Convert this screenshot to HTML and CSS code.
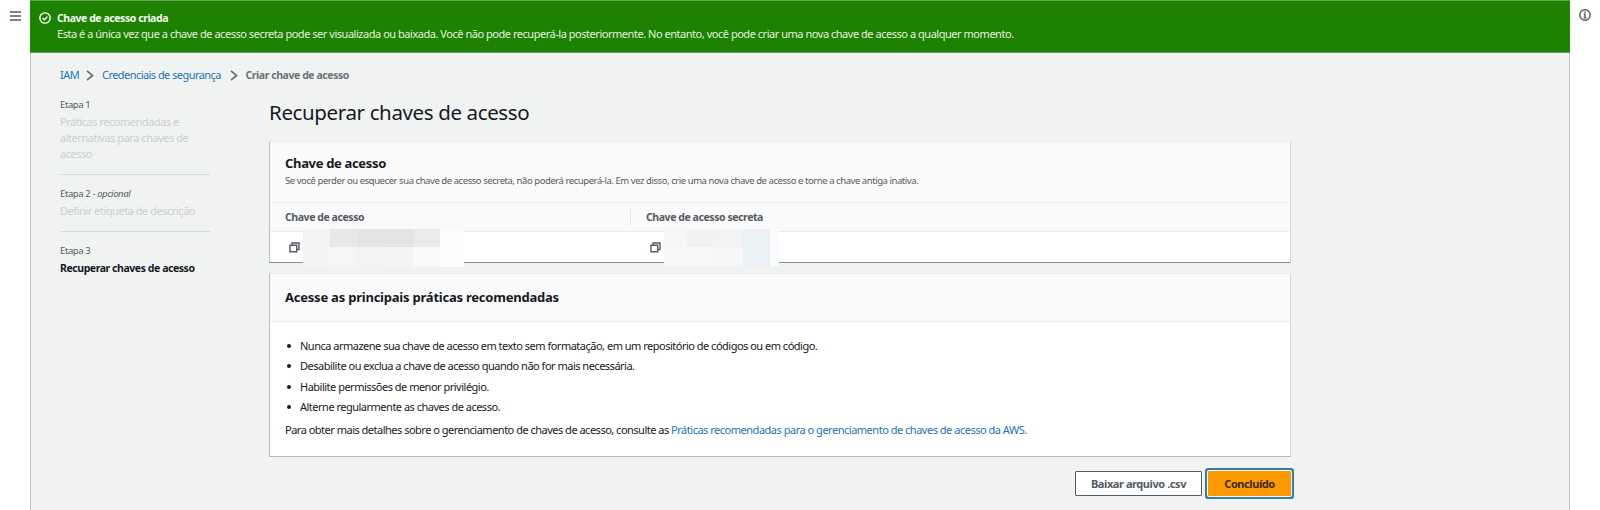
FILE: index.html
```html
<!DOCTYPE html>
<html lang="pt-BR">
<head>
<meta charset="utf-8">
<title>Criar chave de acesso</title>
<link rel="stylesheet" href="styles.css">
</head>
<body>
<div class="app">
  <aside class="rail rail-left">
    <svg class="menu-icon" viewBox="0 0 11 10"><path d="M0 1h11M0 5h11M0 9h11"/></svg>
  </aside>
  <main class="main">
    <section class="flash">
      <svg class="flash-icon" viewBox="0 0 13 13"><circle cx="6.5" cy="6.5" r="5.6"/><path d="M3.8 6.6l2 1.9 3.4-3.5"/></svg>
      <div>
        <div class="flash-title">Chave de acesso criada</div>
        <div class="flash-text">Esta é a única vez que a chave de acesso secreta pode ser visualizada ou baixada. Você não pode recuperá-la posteriormente. No entanto, você pode criar uma nova chave de acesso a qualquer momento.</div>
      </div>
    </section>
    <div class="page">
      <nav class="crumbs">
        <a class="crumb-first">IAM</a>
        <svg class="chevron" viewBox="0 0 8 11"><path d="M1 .8l5.6 4.7L1 10.2"/></svg>
        <a class="crumb-mid">Credenciais de segurança</a>
        <svg class="chevron" viewBox="0 0 8 11"><path d="M1 .8l5.6 4.7L1 10.2"/></svg>
        <b>Criar chave de acesso</b>
      </nav>
      <div class="columns">
        <ol class="steps">
          <li class="step"><div class="step-label">Etapa 1</div><div class="step-name">Práticas recomendadas e<br>alternativas para chaves de<br>acesso</div></li>
          <li class="step"><div class="step-label">Etapa 2 - <i>opcional</i></div><div class="step-name">Definir etiqueta de descrição</div></li>
          <li class="step"><div class="step-label">Etapa 3</div><div class="step-name current">Recuperar chaves de acesso</div></li>
        </ol>
        <div class="content">
          <h1>Recuperar chaves de acesso</h1>
          <section class="card keys">
            <header class="card-head keys-head">
              <h2>Chave de acesso</h2>
              <p>Se você perder ou esquecer sua chave de acesso secreta, não poderá recuperá-la. Em vez disso, crie uma nova chave de acesso e torne a chave antiga inativa.</p>
            </header>
            <div class="table-row table-head"><div>Chave de acesso</div><div class="split">Chave de acesso secreta</div></div>
            <div class="table-row table-body">
              <div class="cell">
                <svg class="copy" viewBox="0 0 11 11"><path d="M3 3V1h7v6.500H8M1 3.300h6.700v6.500H1z"/></svg>
                <div class="mask mask-a"><i class="a1"></i><i class="a2"></i><i class="a3"></i><i class="a3"></i><i class="a4"></i><i class="a5"></i><i class="a6"></i><i class="a7"></i><i class="a1"></i><i class="a6"></i><i class="a8"></i><i class="a9"></i></div>
              </div>
              <div class="cell">
                <svg class="copy" viewBox="0 0 11 11"><path d="M3 3V1h7v6.500H8M1 3.300h6.700v6.500H1z"/></svg>
                <div class="mask mask-b"><i class="b1"></i><i class="b2"></i><i class="b3"></i><i class="b4"></i><i class="b5"></i><i class="b6"></i><i class="b6"></i><i class="b1"></i><i class="b4"></i><i class="b5"></i></div>
              </div>
            </div>
          </section>
          <section class="card tips">
            <header class="card-head tips-head"><h2 class="wide">Acesse as principais práticas recomendadas</h2></header>
            <div class="tips-body">
              <ul>
                <li>Nunca armazene sua chave de acesso em texto sem formatação, em um repositório de códigos ou em código.</li>
                <li>Desabilite ou exclua a chave de acesso quando não for mais necessária.</li>
                <li>Habilite permissões de menor privilégio.</li>
                <li>Alterne regularmente as chaves de acesso.</li>
              </ul>
              <p>Para obter mais detalhes sobre o gerenciamento de chaves de acesso, consulte as <a>Práticas recomendadas para o gerenciamento de chaves de acesso da AWS.</a></p>
            </div>
          </section>
          <div class="actions">
            <button class="btn">Baixar arquivo .csv</button>
            <button class="btn primary">Concluído</button>
          </div>
        </div>
      </div>
    </div>
  </main>
  <aside class="rail rail-right">
    <svg class="info-icon" viewBox="0 0 12 12"><circle cx="6" cy="6" r="5.200"/><path d="M6 2.500v1.600M4.700 5.300H6v3.500M4.400 8.900h3.200"/></svg>
  </aside>
</div>
</body>
</html>
```
FILE: styles.css
```css
* { box-sizing: border-box; }
body {
  margin: 0;
  background: #fff;
  color: #16191f;
  font: 11px/16px "Noto Sans", sans-serif;
  letter-spacing: -0.5px;
  overflow: hidden;
}
h1, h2, p, ul, ol { margin: 0; padding: 0; }
svg { display: block; fill: none; flex: none; }
a { color: #1b74b8; }
.app { display: flex; height: 510px; }
.rail { width: 30px; flex: none; }
.rail-left { padding: 11px 0 0 10px; }
.rail-right { padding: 9px 0 0 9px; }
.menu-icon { width: 11px; height: 10px; stroke: #545b64; stroke-width: 1.5; }
.info-icon { width: 12px; height: 12px; stroke: #545b64; stroke-width: 1.4; }
.main { flex: 1; min-width: 0; display: flex; flex-direction: column; white-space: nowrap; }

.flash {
  display: flex;
  gap: 6px;
  height: 53px;
  padding: 9px 8px 0 9px;
  background: #1d8102;
  border-top: 1px solid #61a74e;
  border-bottom: 1px solid #6f9a69;
  color: #f4faf2;
}
.flash-icon { width: 12px; height: 12px; margin-top: 2px; stroke: #fff; stroke-width: 1.5; }
.flash-title { font-weight: 700; font-size: 10.5px; letter-spacing: -0.445px; }
.flash-text { letter-spacing: -0.468px; color: #e2f1de; }

.page {
  flex: 1;
  padding: 14px 29px 0;
  background: #f1f3f3;
  border: solid #c3c9c9;
  border-width: 0 1px;
}
.crumbs { display: flex; align-items: center; height: 16px; letter-spacing: -0.55px; }
.crumbs b { color: #6b7378; font-size: 10.5px; letter-spacing: -0.43px; }
.chevron { width: 8px; height: 11px; margin: 0 8px; stroke: #687078; stroke-width: 1.7; }
.crumb-first { width: 18px; }
.crumb-mid { width: 119.5px; }

.columns { display: flex; gap: 59px; padding-top: 14px; }
.steps { width: 150px; list-style: none; }
.step { padding-bottom: 12px; border-bottom: 1px solid #d5dbdb; }
.step + .step { padding-top: 11px; }
.step:last-child { border: 0; }
.step-label { font-size: 9.5px; line-height: 16px; letter-spacing: -0.4px; color: #545b64; }
.step-name { padding-top: 1px; margin-bottom: -0.5px; line-height: 16.2px; letter-spacing: -0.465px; color: #cbcfcf; }
.step-name.current { color: #16191f; font-weight: 700; font-size: 10.5px; letter-spacing: -0.44px; }

.content { width: 1022px; }
h1 { padding: 2px 0 0; height: 44px; font-size: 20.500px; line-height: 26px; font-weight: 400; letter-spacing: -0.37px; }
h2 { font-size: 13px; line-height: 20px; font-weight: 700; letter-spacing: -0.33px; }
h2.wide { letter-spacing: -0.22px; }
.card { background: #fff; border: 1px solid #d3d8d8; border-top-color: #e9ecec; border-left-color: #b9c0c0; }
.card-head { background: #fafafa; border-bottom: 1px solid #eaeded; padding: 0 15px; }
.keys { border-bottom-color: #879193; }
.keys-head { height: 61px; padding-top: 11px; }
.keys-head p { font-size: 9.500px; letter-spacing: -0.438px; line-height: 16px; color: #545b64; }
.table-row { display: grid; grid-template-columns: 360px 1fr; }
.table-head { height: 29px; align-items: center; background: #fafafa; border-bottom: 1px solid #eaeded; color: #545b64; font-size: 10.5px; font-weight: 700; letter-spacing: -0.43px; }
.table-head > div { padding-left: 15px; }
.table-head .split { line-height: 16px; border-left: 1px solid #e1e5e5; }
.table-body { height: 30px; }
.cell { position: relative; padding: 10px 0 0 19px; }
.cell + .cell { padding-left: 20px; }
.copy { width: 11px; height: 11px; stroke: #545b64; stroke-width: 1.4; }
.mask { position: absolute; top: -3px; display: grid; grid-template-rows: 18px 20px; }
.mask-a { left: 33px; grid-template-columns: 27px 27px 28px 28px 27px 24px; }
.mask-b { left: 34px; grid-template-columns: 23px 27px 29px 27px 9px; grid-template-rows: 18px 19px; }
.a1 { background: #f2f3f3; }
.a2 { background: #e8e8e8; }
.a3 { background: #e4e4e4; }
.a4 { background: #ebebeb; }
.a5 { background: #fcfcfc; }
.a6 { background: #f3f5f5; }
.a7 { background: #f5f6f6; }
.a8 { background: #f8faf9; }
.a9 { background: #fafcfb; }
.b1 { background: #f5f7f7; }
.b2 { background: #f3f2f2; }
.b3 { background: #f2f3f4; }
.b4 { background: #e9f1f5; }
.b5 { background: #f9fbfd; }
.b6 { background: #f7f9f8; }

.tips { margin-top: 10px; height: 184px; border-bottom-color: #b3baba; }
.tips-head { height: 48px; padding-top: 13px; }
.tips-body { padding: 14px 15px 0; }
.tips-body ul { list-style: none; }
.tips-body li { display: flex; align-items: center; height: 20.300px; }
.tips-body li::before { content: ""; width: 4px; height: 4px; margin: 0 9px 0 2px; border-radius: 50%; background: #16191f; }
.tips-body p { padding-top: 5px; }
.tips-body a { letter-spacing: -0.485px; }

.actions { display: flex; justify-content: flex-end; gap: 6px; padding-top: 14px; }
.btn {
  width: 127px;
  height: 25px;
  padding: 0;
  border: 1px solid #545b64;
  border-radius: 1px;
  background: #fff;
  color: #545b64;
  font: 700 11px/20px "Noto Sans", sans-serif;
  letter-spacing: -0.43px;
}
.btn.primary { width: 83px; background: #ff9900; border-color: #ff9900; color: #3a2b14; box-shadow: 0 0 0 1px #f6f8f8, 0 0 0 3px #2f7fae; }
```
